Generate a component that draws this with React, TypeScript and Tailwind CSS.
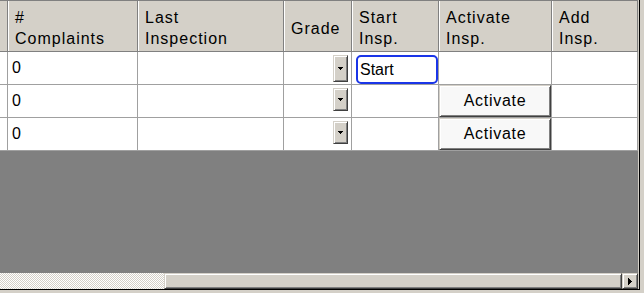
const W = ["w-[8px]", "w-[130px]", "w-[146px]", "w-[68px]", "w-[87px]", "w-[113px]", "w-[86px]"];

const headers: string[][] = [
  [],
  ["#", "Complaints"],
  ["Last", "Inspection"],
  ["Grade"],
  ["Start", "Insp."],
  ["Activate", "Insp."],
  ["Add", "Insp."],
];

const rows = [
  { complaints: "0", start: true, activate: false },
  { complaints: "0", start: false, activate: true },
  { complaints: "0", start: false, activate: true },
];

const bevel =
  "border border-t-[#d4d0c8] border-l-[#d4d0c8] border-r-[#404040] border-b-[#404040] shadow-[inset_1px_1px_0_#ffffff,inset_-1px_-1px_0_#808080]";

function DownArrow() {
  return (
    <svg width="5" height="3" viewBox="0 0 5 3" shapeRendering="crispEdges">
      <rect x="0" y="0" width="5" height="1" fill="#000" />
      <rect x="1" y="1" width="3" height="1" fill="#000" />
      <rect x="2" y="2" width="1" height="1" fill="#000" />
    </svg>
  );
}

function RightArrow() {
  return (
    <svg width="4" height="7" viewBox="0 0 4 7" shapeRendering="crispEdges">
      <rect x="0" y="0" width="1" height="7" fill="#000" />
      <rect x="1" y="1" width="1" height="5" fill="#000" />
      <rect x="2" y="2" width="1" height="3" fill="#000" />
      <rect x="3" y="3" width="1" height="1" fill="#000" />
    </svg>
  );
}

export default function App() {
  return (
    <div className="w-[644px] h-[293px] bg-[#d4d0c8] overflow-hidden font-['Liberation_Sans',Arial,sans-serif] text-[16px] text-black">
      <div className="w-[640px] h-[290px] border-r border-b border-black">
        <div className="w-[638px] h-[289px] flex flex-col border-t border-[#808080]">
          {/* column headers */}
          <div className="flex h-[51px] shrink-0 bg-[#d4d0c8] border-b border-[#808080]">
            {headers.map((lines, i) => (
              <div
                key={i}
                className={`${W[i]} shrink-0 flex flex-col justify-center pt-[4px] leading-[21px] tracking-[1px] border-r border-r-[#808080] ${
                  i === 0 ? "" : "border-l border-l-white pl-[6px]"
                }`}
              >
                {lines.map((l) => (
                  <div key={l} className="whitespace-nowrap">{l}</div>
                ))}
              </div>
            ))}
          </div>

          {/* data rows */}
          {rows.map((r, ri) => (
            <div key={ri} className="flex h-[33px] shrink-0 bg-white border-b border-[#a0a0a0]">
              <div className={`${W[0]} shrink-0 border-r border-[#a0a0a0]`} />
              <div className={`${W[1]} shrink-0 border-r border-[#a0a0a0] flex items-center pl-[4px]`}>
                {r.complaints}
              </div>
              <div className={`${W[2]} shrink-0 border-r border-[#a0a0a0]`} />
              <div className={`${W[3]} shrink-0 border-r border-[#a0a0a0] flex items-start justify-end pr-[3px] pt-[3px]`}>
                <div className={`w-[15px] ${ri === 0 ? "h-[27px]" : "h-[23px]"} bg-[#d4d0c8] ${bevel} flex items-center justify-center`}>
                  <DownArrow />
                </div>
              </div>
              <div className={`${W[4]} shrink-0 border-r border-[#a0a0a0] flex pl-[4px] pt-[3px]`}>
                {r.start && (
                  <div className="flex-1 border-2 border-[#1a35e8] rounded-[5px] flex items-center pl-[2px]">
                    Start
                  </div>
                )}
              </div>
              <div className={`${W[5]} shrink-0 border-r border-[#a0a0a0] flex`}>
                {r.activate && (
                  <div className={`flex-1 bg-[#f8f8f8] ${bevel} flex items-center justify-center tracking-[0.7px]`}>
                    Activate
                  </div>
                )}
              </div>
              <div className={`${W[6]} shrink-0 border-r border-[#a0a0a0]`} />
            </div>
          ))}

          {/* empty grid area */}
          <div className="flex-1 bg-[#808080]" />

          {/* horizontal scrollbar */}
          <div className="flex h-[16px] shrink-0">
            <div className="w-[164px] shrink-0 bg-[image:repeating-conic-gradient(#d4d0c8_0%_25%,#ffffff_0%_50%)] bg-[length:2px_2px]" />
            <div className={`w-[458px] shrink-0 bg-[#d4d0c8] ${bevel}`} />
            <div className={`w-[16px] shrink-0 bg-[#d4d0c8] ${bevel} flex items-center justify-center`}>
              <RightArrow />
            </div>
          </div>
        </div>
      </div>
    </div>
  );
}
